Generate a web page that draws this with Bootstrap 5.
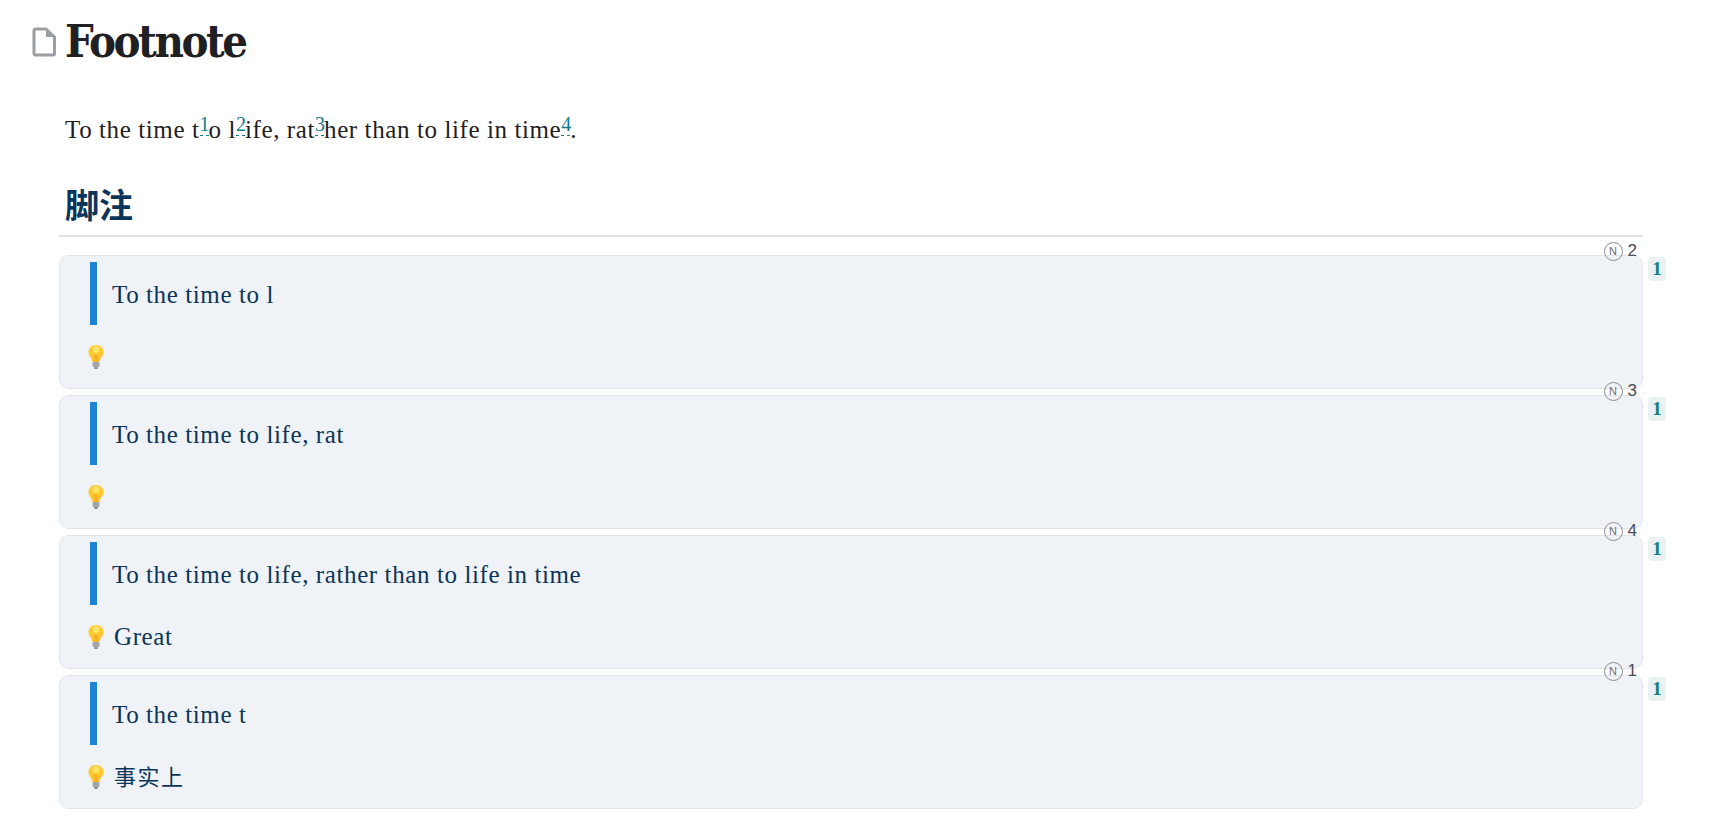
<!DOCTYPE html>
<html lang="zh">

<head>
    <meta charset="UTF-8">
    <meta name="viewport" content="width=device-width, initial-scale=1.0">
    <title>Footnote</title>
    <link href="https://cdn.jsdelivr.net/npm/bootstrap@5.3.0/dist/css/bootstrap.min.css" rel="stylesheet">
    <style>
        body {
            background: #fff;
            color: #1f2023;
            font-family: "Liberation Serif", "Noto Sans CJK SC", serif;
            font-size: 25px;
        }

        .doc-page {
            padding: 0 74px 0 59px;
        }

        .doc-title {
            padding: 14px 0 0 6px;
            position: relative;
        }

        .doc-title svg {
            position: absolute;
            left: -28.500px;
            top: 25.500px;
        }

        .doc-title h1 {
            font-family: "DejaVu Serif Condensed", "DejaVu Serif", "Noto Sans CJK SC", serif;
            font-size: 45px;
            font-weight: 700;
            letter-spacing: -2.400px;
            line-height: 56px;
            margin: 0;
        }

        .doc-text {
            padding: 42px 0 0 6px;
            line-height: 36px;
            letter-spacing: .6px;
            margin: 0;
        }

        .doc-text sup {
            color: #0f7c86;
            font-size: 20px;
            top: -7px;
            line-height: 0;
            vertical-align: baseline;
            position: relative;
            letter-spacing: -1px;
            border-bottom: 1px dashed #0f7c86;
        }

        .doc-heading {
            color: #0b3558;
            font-family: "Noto Sans CJK SC", sans-serif;
            font-size: 34px;
            font-weight: 700;
            line-height: 44px;
            margin: 34px 0 0;
            padding: 0 6px 9px;
            border-bottom: 2px solid #e4e5e9;
        }

        .note-list {
            padding-top: 18px;
        }

        .note-box {
            background: #eff2f7;
            border: 1px solid #e2e4e8;
            border-radius: 10px;
            color: #0b3558;
            height: 134px;
            position: relative;
            padding: 6px 30px 0;
            margin-bottom: 6px;
        }

        .note-quote {
            border-left: 7px solid #1f83d4;
            height: 63px;
            line-height: 65px;
            padding-left: 15px;
            letter-spacing: .6px;
        }

        .note-tip {
            align-items: center;
            height: 36px;
            margin-top: 14px;
            margin-left: -3px;
            gap: 9px;
            letter-spacing: .6px;
        }

        .tip-cjk {
            font-size: 22px;
            letter-spacing: 1.500px;
        }

        .note-count {
            color: #4a4c52;
            font-family: "Liberation Sans", sans-serif;
            font-size: 17px;
            line-height: 20px;
            gap: 5px;
            position: absolute;
            right: 5px;
            top: -15px;
        }

        .note-n {
            border: 1px solid #8b8d92;
            border-radius: 50%;
            font-size: 11px;
            height: 19px;
            width: 19px;
            line-height: 17px;
            text-align: center;
            color: #6c6e73;
        }

        .note-ref {
            background: #e9f1f3;
            border-radius: 4px;
            color: #0f7c86;
            font-size: 19px;
            font-weight: 700;
            height: 24px;
            line-height: 24px;
            position: absolute;
            right: -24px;
            text-align: center;
            top: 1px;
            width: 18px;
        }
    </style>
</head>

<body>
    <div class="doc-page">
        <div class="doc-title">
            <svg width="26" height="32" viewBox="0 0 26 32">
                <path d="M4.500 3H15L23.500 11V27.500A1.500 1.500 0 0 1 22 29H4.500A1.500 1.500 0 0 1 3 27.500V4.500A1.500 1.500 0 0 1 4.500 3Z" fill="#fff" stroke="#9a9da2" stroke-width="3" stroke-linejoin="round" />
                <path d="M15 3V11H23.500Z" fill="#9a9da2" />
            </svg>
            <h1>Footnote</h1>
        </div>

        <p class="doc-text">To the time t<sup>1</sup>o l<sup>2</sup>ife, rat<sup>3</sup>her than to life in time<sup>4</sup>.</p>

        <h2 class="doc-heading">脚注</h2>

        <div class="note-list" id="notes"></div>
    </div>

    <script src="https://cdn.jsdelivr.net/npm/bootstrap@5.3.0/dist/js/bootstrap.bundle.min.js"></script>
    <script>
        const notes = [
            { n: '2', quote: 'To the time to l', tip: '' },
            { n: '3', quote: 'To the time to life, rat', tip: '' },
            { n: '4', quote: 'To the time to life, rather than to life in time', tip: 'Great' },
            { n: '1', quote: 'To the time t', tip: '事实上', tipClass: 'tip-cjk' }
        ];

        const bulb = `<svg width="18" height="26" viewBox="0 0 18 26">
            <path d="M9 1C4.500 1 1.500 4.200 1.500 8.300C1.500 12 4.800 14 5.500 18H12.500C13.200 14 16.500 12 16.500 8.300C16.500 4.200 13.500 1 9 1Z" fill="#fdc92f"/>
            <circle cx="9" cy="5.500" r="3.500" fill="#ffe566"/>
            <path d="M7 18L6.500 11H11.500L11 18Z" fill="#f5b323"/>
            <rect x="5.500" y="18" width="7" height="5" rx="1" fill="#a3a6ab"/>
            <rect x="7" y="23" width="4" height="2" rx="1" fill="#8f9297"/>
        </svg>`;

        document.getElementById('notes').innerHTML = notes.map(function (item) {
            return `<div class="note-box">
                <div class="note-count d-flex align-items-center"><span class="note-n">N</span><span>${item.n}</span></div>
                <div class="note-ref">1</div>
                <div class="note-quote">${item.quote}</div>
                <div class="note-tip d-flex">${bulb}<span class="${item.tipClass || ''}">${item.tip}</span></div>
            </div>`;
        }).join('');
    </script>
</body>

</html>
